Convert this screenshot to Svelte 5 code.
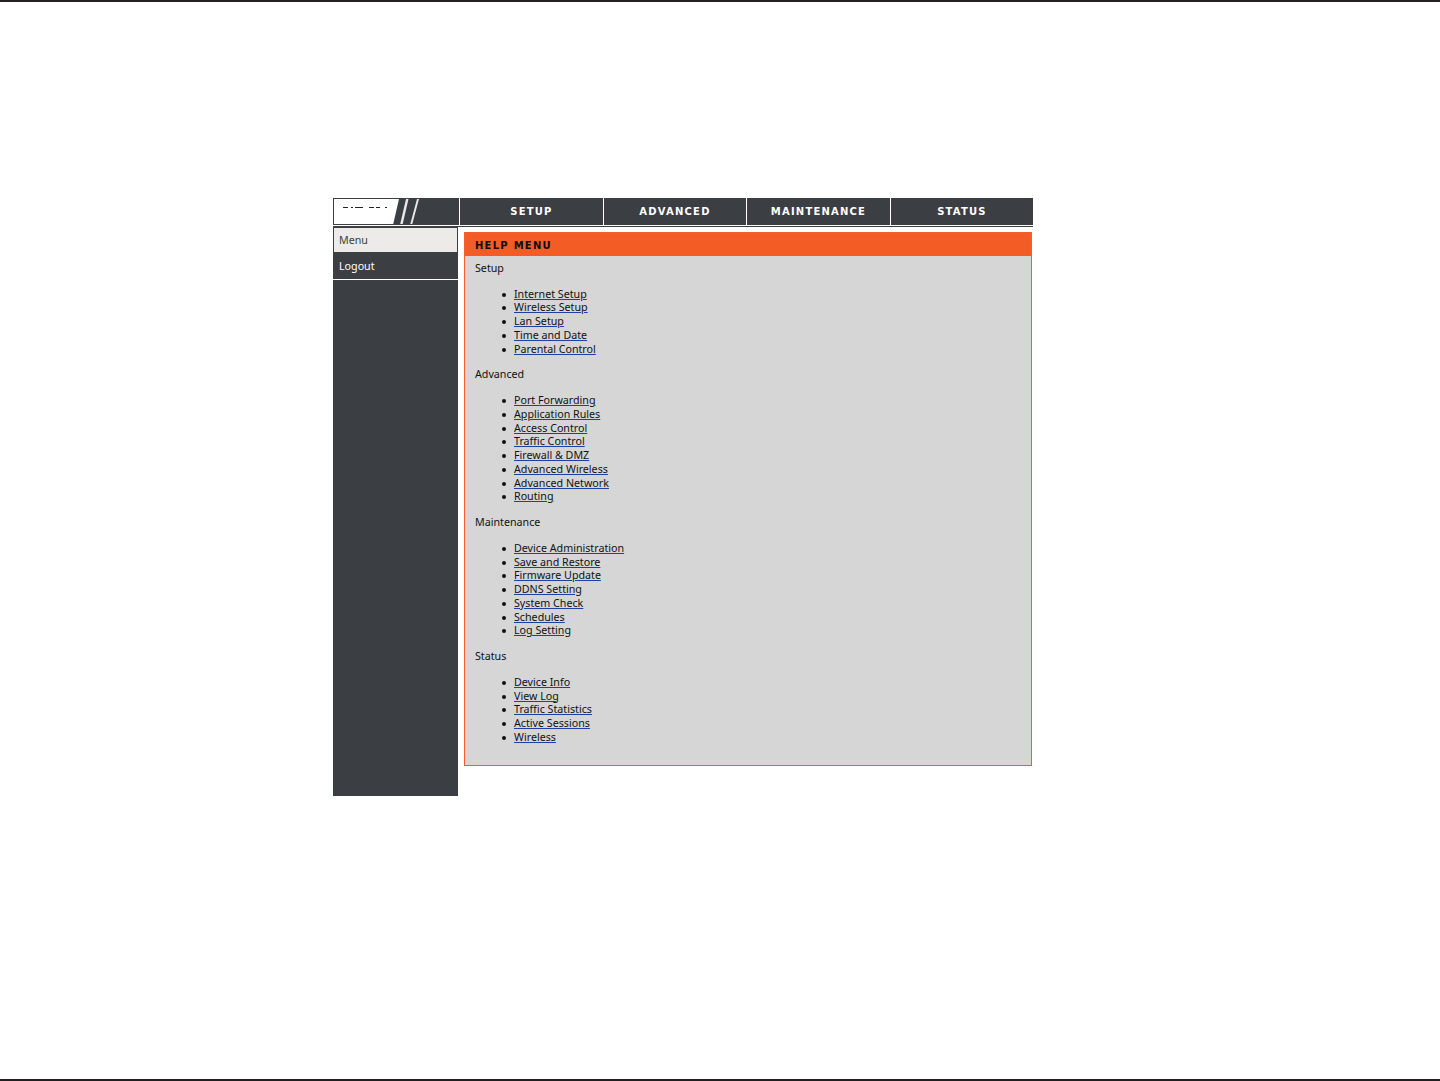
<script lang="ts">
	const tabs = ["SETUP", "ADVANCED", "MAINTENANCE", "STATUS"];
	const sections = [
		{ title: "Setup", links: ["Internet Setup", "Wireless Setup", "Lan Setup", "Time and Date", "Parental Control"] },
		{ title: "Advanced", links: ["Port Forwarding", "Application Rules", "Access Control", "Traffic Control", "Firewall & DMZ", "Advanced Wireless", "Advanced Network", "Routing"] },
		{ title: "Maintenance", links: ["Device Administration", "Save and Restore", "Firmware Update", "DDNS Setting", "System Check", "Schedules", "Log Setting"] },
		{ title: "Status", links: ["Device Info", "View Log", "Traffic Statistics", "Active Sessions", "Wireless"] },
	];
</script>

<div class="page">
	<div class="frame">
		<header class="top">
			<div class="logo">
				<svg width="125" height="26" viewBox="0 0 125 26">
					<path d="M0 0H65L59 26H0Z" fill="#fff" />
					<path d="M9 8.5h5M17 8.5h2M21 8.5h8M35 8.5h5M42 8.5h4M51 8.5h2" stroke="#222" stroke-width="1.2" />
					<path d="M72 0L66 26H68.5L74.5 0ZM83 0L76 26H78L85 0Z" fill="#e8e8e8" />
				</svg>
			</div>
			<nav class="tabs">
				{#each tabs as tab}
					<div class="tab">{tab}</div>
				{/each}
			</nav>
		</header>

		<div class="columns">
			<aside class="side">
				<div class="item current">Menu</div>
				<div class="item">Logout</div>
			</aside>

			<main class="panel">
				<h1>HELP MENU</h1>
				<div class="body">
					{#each sections as section}
						<p>{section.title}</p>
						<ul>
							{#each section.links as link}
								<li><a href="#top">{link}</a></li>
							{/each}
						</ul>
					{/each}
				</div>
			</main>
		</div>
	</div>
</div>

<style>
	:global(body) {
		margin: 0;
		background: #fff;
	}

	.page {
		height: 1081px;
		box-sizing: border-box;
		border-top: 2px solid #231f20;
		border-bottom: 2px solid #231f20;
		padding-top: 196px;
		font-family: "Noto Sans", "DejaVu Sans", sans-serif;
		font-size: 10.7px;
		color: #111;
	}

	.frame {
		width: 700px;
		margin-left: 333px;
	}

	.top {
		display: flex;
		height: 27px;
		border-bottom: 1px solid #3b3e43;
		padding-bottom: 1px;
	}

	.logo {
		width: 126px;
		height: 27px;
		background: #3b3e43;
		border: 1px solid #3b3e43;
		border-right: 0;
		box-sizing: border-box;
		overflow: hidden;
	}

	.logo svg {
		display: block;
	}

	.tabs {
		flex: 1;
		display: grid;
		grid-template-columns: 144px 143px 144px 143px;
	}

	.tab {
		display: flex;
		align-items: center;
		justify-content: center;
		background: #3b3e43;
		border-left: 1px solid #fff;
		color: #fff;
		font-family: "DejaVu Sans", sans-serif;
		font-size: 10px;
		font-weight: 700;
		letter-spacing: 1.2px;
	}

	.columns {
		display: flex;
		align-items: flex-start;
		gap: 6px;
	}

	.side {
		width: 125px;
		height: 569px;
		background: #3b3e43;
		flex: none;
	}

	.item {
		box-sizing: border-box;
		height: 26px;
		padding: 5px 6px 0;
		border-bottom: 1px solid #fff;
		color: #fff;
		line-height: 14px;
	}

	.current {
		height: 26px;
		margin-bottom: 1px;
		padding: 5px 5px 0;
		border: 1px solid #3b3e43;
		background: #ecebe9;
		color: #3b3e43;
	}

	.panel {
		width: 568px;
		height: 534px;
		margin-top: 5px;
		box-sizing: border-box;
		border: 1px solid #f25f2a;
		background: #d6d6d6;
	}

	h1 {
		margin: 0;
		height: 23px;
		box-sizing: border-box;
		padding: 6px 0 0 10px;
		background: #f45c26;
		color: #0d0d0d;
		font-family: "DejaVu Sans", sans-serif;
		font-size: 10px;
		line-height: 13px;
		font-weight: 700;
		letter-spacing: 1.25px;
	}

	.body {
		padding: 5.8px 10px;
		line-height: 13.75px;
	}

	p {
		margin: 0 0 12px;
	}

	ul {
		margin: 0 0 12px;
		padding-left: 39px;
		list-style: none;
	}

	li {
		position: relative;
	}

	/* bigger bullet than the native marker at this font size */
	li::before {
		content: "";
		position: absolute;
		left: -12px;
		top: 5px;
		width: 4px;
		height: 4px;
		border-radius: 50%;
		background: #111;
	}

	a {
		color: #111;
		text-decoration-color: #1f3fa8;
	}
</style>
